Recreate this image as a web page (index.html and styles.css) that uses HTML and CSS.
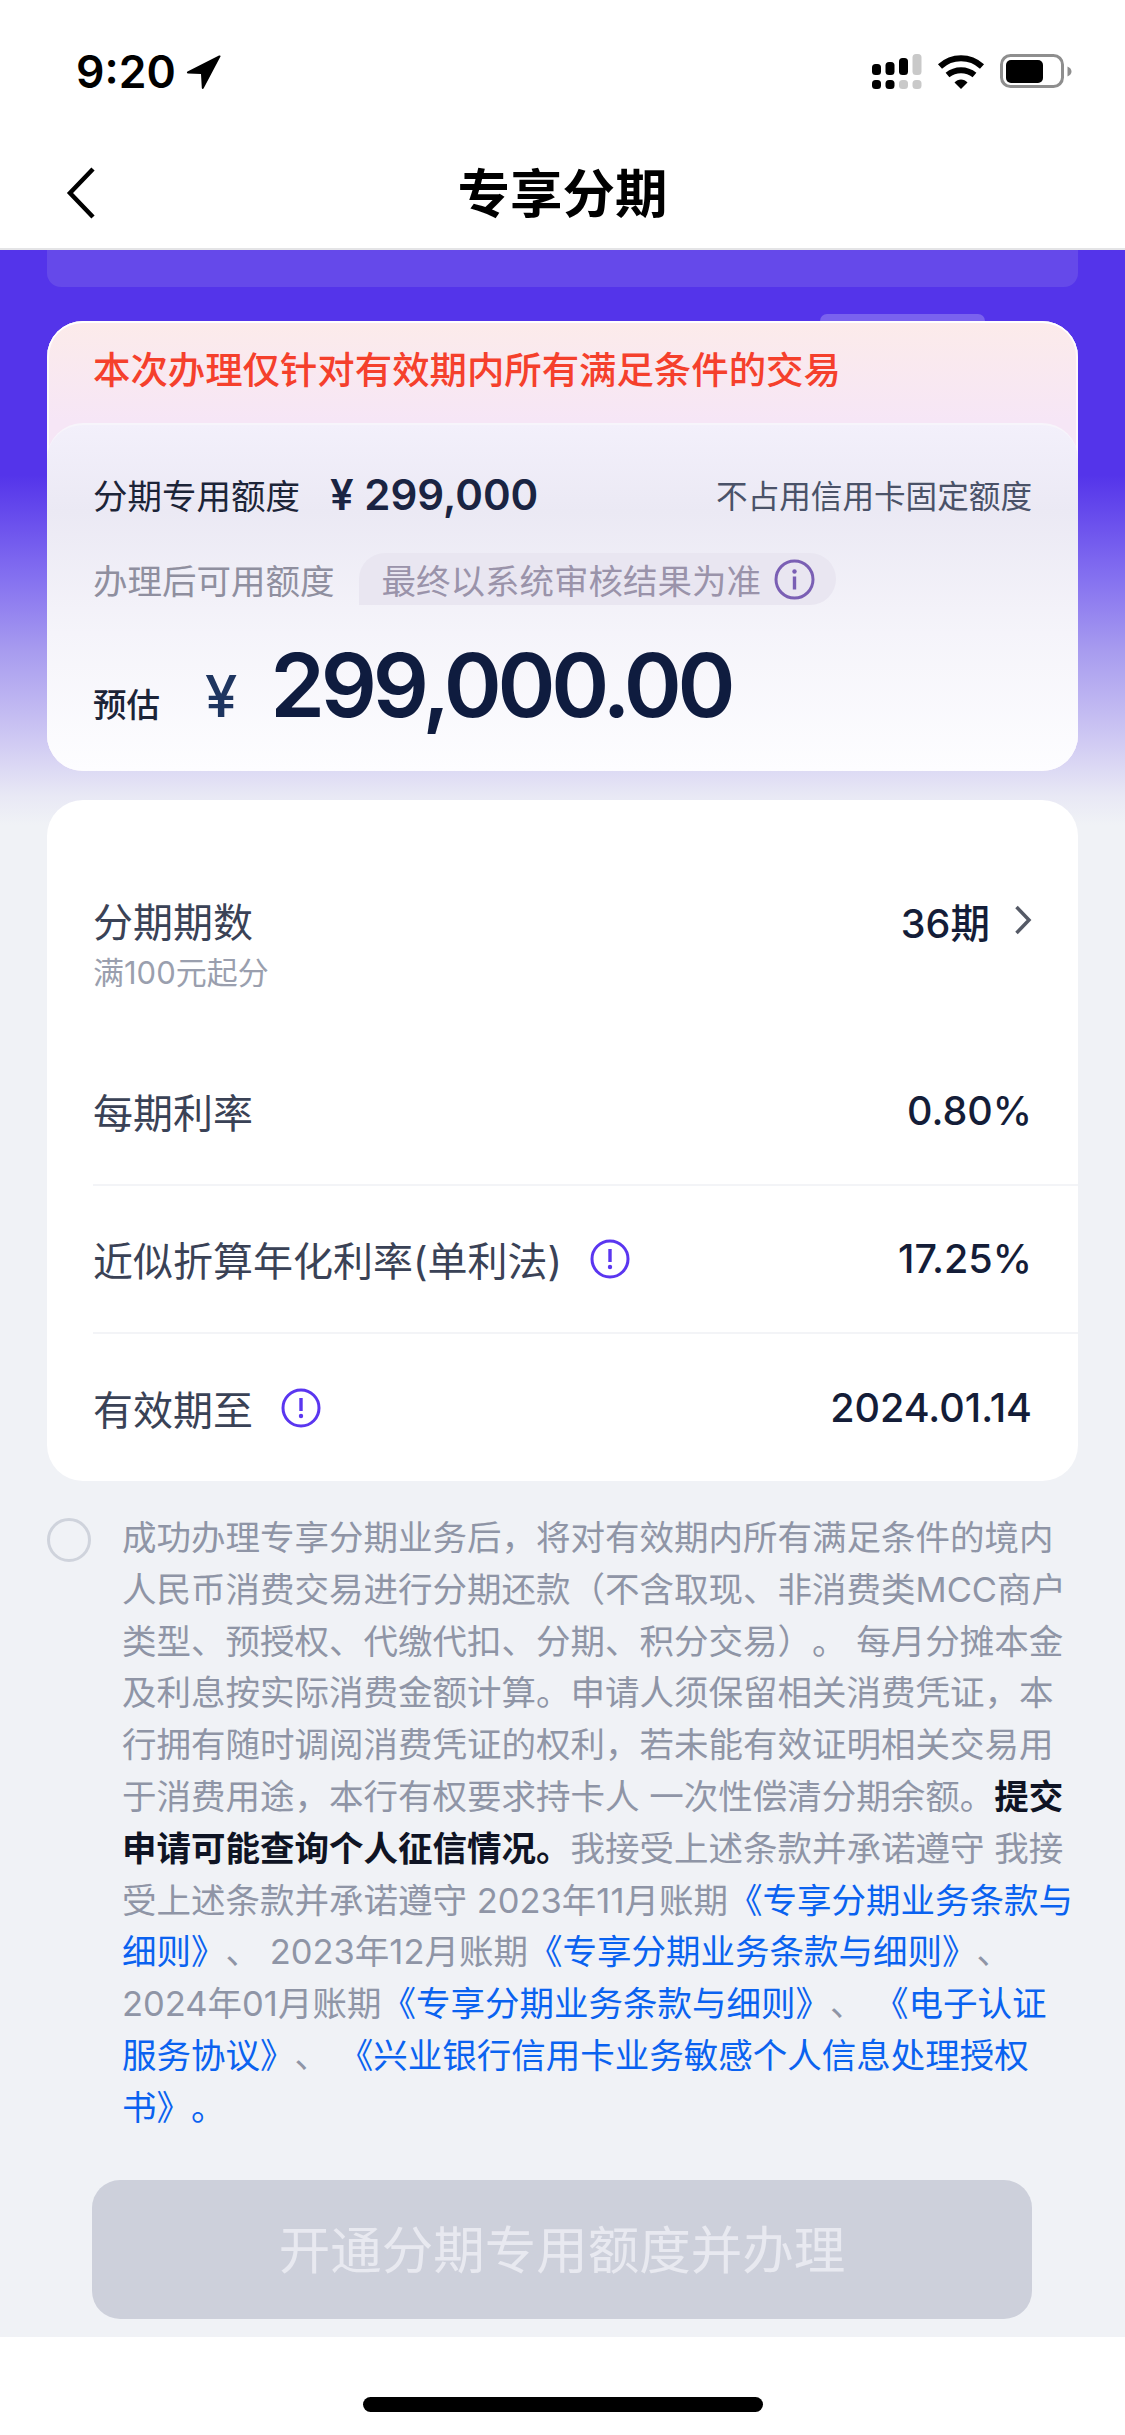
FILE: index.html
```html
<!DOCTYPE html>
<html lang="zh-CN">
<head>
  <meta charset="UTF-8">
  <title>专享分期</title>
  <link rel="stylesheet" href="styles.css">
</head>
<body>
  <!-- 状态栏 -->
  <div class="status-bar">
    <div class="status-left">
      <span class="time">9:20</span>
      <svg class="loc-icon" width="36" height="36" viewBox="0 0 36 36"><path d="M33 1.500 1.500 17.500c-1 .6-.7 1.900.5 1.900l13 .5.800 14c.1 1.200 1.400 1.400 1.900.4L34.600 2.200c.2-.5-.8-1-1.600-.7z" fill="#000"/></svg>
    </div>
    <div class="status-right">
      <svg width="50" height="36" viewBox="0 0 50 36">
        <g fill="#000">
          <rect x="0" y="10" width="9" height="11" rx="3.500"/>
          <rect x="13.500" y="8" width="9" height="13" rx="3.500"/>
          <rect x="27" y="4" width="9" height="17" rx="3.500"/>
          <rect x="0" y="26" width="9" height="9" rx="3.500"/>
          <rect x="13.500" y="26" width="9" height="9" rx="3.500"/>
        </g>
        <g fill="#c9c9c9">
          <rect x="40.500" y="0" width="9" height="21" rx="3.500"/>
          <rect x="27" y="26" width="9" height="9" rx="3.500"/>
          <rect x="40.500" y="26" width="9" height="9" rx="3.500"/>
        </g>
      </svg>
      <svg class="wifi-icon" width="48" height="36" viewBox="0 0 48 36">
        <path d="M3 12.500C15 1.500 33 1.500 45 12.500" fill="none" stroke="#000" stroke-width="6"/>
        <path d="M10.500 21C18.500 14.500 29.500 14.500 37.500 21" fill="none" stroke="#000" stroke-width="6"/>
        <path d="M17.500 28.500C21 24.500 27 24.500 30.500 28.500L24 35z" fill="#000"/>
      </svg>
      <svg class="battery-icon" width="72" height="36" viewBox="0 0 72 36">
        <rect x="1.500" y="1.500" width="61" height="31" rx="9" fill="none" stroke="#8e8e8e" stroke-width="3"/>
        <rect x="6" y="6" width="37" height="23" rx="5" fill="#000"/>
        <path d="M67.500 12.500c2.500 1 4 2.700 4 5s-1.500 4-4 5z" fill="#8e8e8e"/>
      </svg>
    </div>
  </div>

  <!-- 导航栏 -->
  <div class="nav-bar">
    <svg class="back-icon" width="30" height="54" viewBox="0 0 30 54"><path d="M27 3 4 27l23 24" fill="none" stroke="#000" stroke-width="4.500"/></svg>
    <h1 class="nav-title">专享分期</h1>
  </div>

  <div class="content">
    <div class="ghost-card"></div>

    <div class="hero">
      <div class="hero-tab"></div>
      <div class="notice">本次办理仅针对有效期内所有满足条件的交易</div>
      <div class="quota">
        <div class="quota-row">
          <span class="quota-label">分期专用额度</span>
          <span class="quota-amount">¥ 299,000</span>
          <span class="quota-note">不占用信用卡固定额度</span>
        </div>
        <div class="after-row">
          <span class="after-label">办理后可用额度</span>
          <span class="after-pill">
            最终以系统审核结果为准
            <svg width="41" height="41" viewBox="0 0 41 41">
              <circle cx="20.500" cy="20.500" r="18.500" fill="none" stroke="#7a5fb4" stroke-width="3"/>
              <circle cx="20.500" cy="12.500" r="2.200" fill="#7a5fb4"/>
              <rect x="18.800" y="17.500" width="3.400" height="13" fill="#7a5fb4"/>
            </svg>
          </span>
        </div>
        <div class="estimate-row">
          <span class="estimate-label">预估</span>
          <span class="estimate-yen">¥</span>
          <span class="estimate-amount">299,000.00</span>
        </div>
      </div>
    </div>

    <div class="detail-card">
      <div class="detail-row first">
        <div>
          <div class="detail-label">分期期数</div>
          <div class="detail-sub">满100元起分</div>
        </div>
        <div class="detail-value">
          36期
          <svg width="18" height="30" viewBox="0 0 18 30"><path d="M2.500 2 15 15 2.500 28" fill="none" stroke="#555a66" stroke-width="3.500"/></svg>
        </div>
      </div>
      <div class="detail-row line">
        <div class="detail-label">每期利率</div>
        <div class="detail-value">0.80%</div>
      </div>
      <div class="detail-row line">
        <div class="detail-label">
          近似折算年化利率(单利法)
          <svg class="alert-icon" width="40" height="40" viewBox="0 0 40 40">
            <circle cx="20" cy="20" r="18" fill="none" stroke="#5a36f0" stroke-width="3"/>
            <rect x="18.300" y="10" width="3.400" height="13" fill="#5a36f0"/>
            <circle cx="20" cy="28" r="2.200" fill="#5a36f0"/>
          </svg>
        </div>
        <div class="detail-value">17.25%</div>
      </div>
      <div class="detail-row">
        <div class="detail-label">
          有效期至
          <svg class="alert-icon" width="40" height="40" viewBox="0 0 40 40">
            <circle cx="20" cy="20" r="18" fill="none" stroke="#5a36f0" stroke-width="3"/>
            <rect x="18.300" y="10" width="3.400" height="13" fill="#5a36f0"/>
            <circle cx="20" cy="28" r="2.200" fill="#5a36f0"/>
          </svg>
        </div>
        <div class="detail-value">2024.01.14</div>
      </div>
    </div>

    <div class="agreement">
      <span class="check"></span>
      <p class="agreement-text">成功办理专享分期业务后，将对有效期内所有满足条件的境内<br>人民币消费交易进行分期还款（不含取现、非消费类MCC商户<br>类型、预授权、代缴代扣、分期、积分交易）。 每月分摊本金<br>及利息按实际消费金额计算。申请人须保留相关消费凭证，本<br>行拥有随时调阅消费凭证的权利，若未能有效证明相关交易用<br>于消费用途，本行有权要求持卡人 一次性偿清分期余额。<b>提交<br>申请可能查询个人征信情况。</b>我接受上述条款并承诺遵守 我接<br>受上述条款并承诺遵守 2023年11月账期<a>《专享分期业务条款与<br>细则》</a>、 2023年12月账期<a>《专享分期业务条款与细则》</a>、<br>2024年01月账期<a>《专享分期业务条款与细则》</a>、 <a>《电子认证<br>服务协议》</a>、 <a>《兴业银行信用卡业务敏感个人信息处理授权<br>书》。</a></p>
    </div>

    <button class="submit-btn">开通分期专用额度并办理</button>
  </div>

  <div class="home-bar">
    <div class="home-indicator"></div>
  </div>
</body>
</html>
```

FILE: styles.css
```css
* {
  box-sizing: border-box;
}

html, body {
  margin: 0;
  padding: 0;
}

body {
  width: 1125px;
  height: 2435px;
  overflow: hidden;
  background: #fff;
  font-family: Inter, "Noto Sans CJK SC", sans-serif;
  color: #0f1c3f;
  text-spacing-trim: space-all;
}

/* status bar */
.status-bar {
  height: 142px;
  padding: 50px 53px 0 76px;
  display: flex;
  justify-content: space-between;
  align-items: flex-start;
}

.status-left {
  display: flex;
  align-items: center;
  gap: 10px;
  height: 44px;
}

.time {
  font-size: 44.500px;
  font-weight: 600;
  color: #000;
  line-height: 44px;
}

.status-right {
  display: flex;
  align-items: flex-start;
  gap: 15px;
  margin-top: 4px;
}

/* nav */
.nav-bar {
  position: relative;
  height: 108px;
  display: flex;
  align-items: center;
  justify-content: center;
  padding-bottom: 10px;
  border-bottom: 2px solid #e4e4e6;
}

.back-icon {
  position: absolute;
  left: 66px;
  top: 24px;
}

.nav-title {
  margin: 0;
  font-size: 52.500px;
  font-weight: 700;
  color: #000;
}

/* main */
.content {
  height: 2087px;
  padding: 0 47px;
  background: linear-gradient(to bottom, #5434ea 0, #5434ea 225px, #8470f0 327px, #a79bef 400px, #cfc9f3 490px, #e8e8f5 545px, #f0f2f6 575px);
}

.ghost-card {
  height: 37px;
  margin-bottom: 34px;
  background: #6549ea;
  border-radius: 0 0 14px 14px;
}

.hero {
  position: relative;
  height: 450px;
  border-radius: 36px;
  background: linear-gradient(to bottom, #fcebea, #f6e6f6 100px);
  box-shadow: inset 0 2px 0 #fff, inset 2px 0 0 rgba(255, 255, 255, 0.7), inset -2px 0 0 rgba(255, 255, 255, 0.7);
}

.hero-tab {
  position: absolute;
  top: -7px;
  right: 93px;
  width: 165px;
  height: 7px;
  background: #7a62ee;
  border-radius: 14px 14px 0 0;
}

.notice {
  height: 102px;
  padding: 0 46px 8px;
  display: flex;
  align-items: center;
  font-size: 37.400px;
  font-weight: 500;
  color: #f5402c;
}

.quota {
  height: 348px;
  padding: 41px 46px 0;
  border-radius: 36px;
  background: linear-gradient(to bottom, #f3f0fb, #ebe9f4 25%, #f5f4fa 60%, #fdfdff);
  border-top: 2px solid #f7f5fb;
}

.quota-row {
  display: flex;
  align-items: center;
  height: 56px;
}

.quota-label {
  font-size: 34.500px;
  color: #1c2438;
}

.quota-amount {
  margin-left: 30px;
  font-size: 42px;
  font-weight: 600;
  color: #1a2442;
}

.quota-note {
  margin-left: auto;
  font-size: 31.600px;
  color: #4a5268;
}

.after-row {
  display: flex;
  align-items: center;
  margin-top: 31px;
  height: 52px;
}

.after-label {
  font-size: 34.500px;
  color: #8f8f9f;
}

.after-pill {
  display: flex;
  align-items: center;
  gap: 13px;
  height: 52px;
  margin-left: 24px;
  padding: 0 21px 0 23px;
  border-radius: 26px 26px 26px 0;
  background: #e9e6f1;
  font-size: 34.500px;
  color: #9a93aa;
}

.estimate-row {
  display: flex;
  align-items: baseline;
  margin-top: 27px;
}

.estimate-label {
  font-size: 33.500px;
  font-weight: 500;
  color: #1c2438;
}

.estimate-yen {
  margin-left: 45px;
  font-size: 58px;
  font-weight: 500;
  color: #1e3560;
}

.estimate-amount {
  margin-left: 33px;
  font-size: 88px;
  font-weight: 600;
  letter-spacing: -4.300px;
  color: #0f1c3f;
}

.detail-card {
  margin-top: 29px;
  height: 681px;
  border-radius: 36px;
  background: #fff;
}

.detail-row {
  display: flex;
  justify-content: space-between;
  align-items: center;
  height: 148px;
  margin-left: 46px;
  padding-right: 46px;
}

.detail-row.first {
  align-items: flex-start;
  height: 238px;
  padding-top: 95px;
}

.detail-row.line {
  border-bottom: 2px solid #f3f4f7;
}

.detail-label {
  display: flex;
  align-items: center;
  gap: 28px;
  height: 50px;
  font-size: 40px;
  color: #3a4256;
}

.detail-sub {
  margin-top: 14px;
  font-size: 31px;
  line-height: 28px;
  color: #9a9fae;
}

.detail-value {
  display: flex;
  align-items: center;
  gap: 24px;
  height: 50px;
  font-size: 39.500px;
  font-weight: 500;
  color: #141d38;
}

.agreement {
  display: flex;
  gap: 31px;
  margin-top: 31px;
}

.check {
  flex: none;
  width: 44px;
  height: 44px;
  margin-top: 6px;
  border: 3px solid #cfd3dc;
  border-radius: 50%;
}

.agreement-text {
  margin: 0;
  white-space: nowrap;
  font-size: 34.500px;
  line-height: 51.800px;
  color: #8f95a6;
}

.agreement-text b {
  font-weight: 700;
  color: #0f1424;
}

.agreement-text a {
  color: #0a62f0;
}

.submit-btn {
  display: block;
  width: 940px;
  height: 139px;
  margin: 46px 0 0 45px;
  padding: 0 0 6px;
  border: none;
  border-radius: 28px;
  background: #cdd0db;
  font-family: inherit;
  font-size: 51.500px;
  color: #e8e9f0;
}

.home-bar {
  position: relative;
  height: 98px;
  background: #fff;
}

.home-indicator {
  position: absolute;
  left: 363px;
  top: 60px;
  width: 400px;
  height: 15px;
  border-radius: 8px;
  background: #000;
}
```
